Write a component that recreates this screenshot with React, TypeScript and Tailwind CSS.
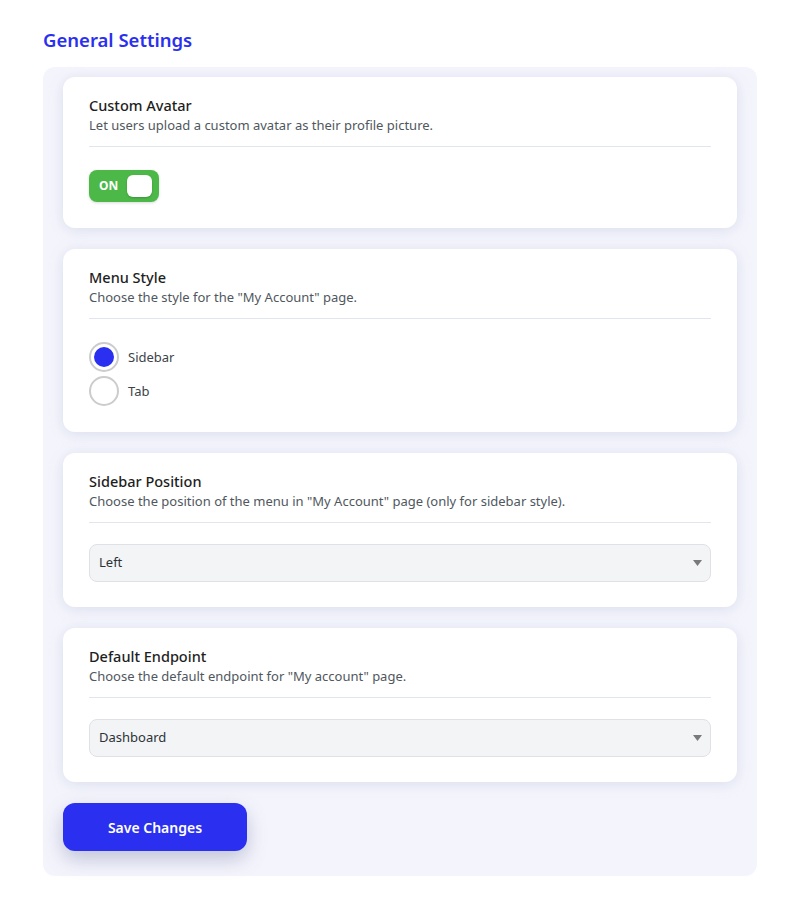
import { useState } from "react";

function CardHeader({ title, desc }: { title: string; desc: string }) {
  return (
    <div className="border-b border-[#e3e5ee] pb-[11px]">
      <h3 className="text-[14.5px] leading-[20px] font-medium text-[#1e1e1e]">{title}</h3>
      <p className="text-[13px] leading-[20px] text-[#50575e]">{desc}</p>
    </div>
  );
}

function Card({ children, pb = "pb-[26px]" }: { children: React.ReactNode; pb?: string }) {
  return (
    <div className={`rounded-xl bg-white px-[26px] pt-[18px] ${pb} shadow-[0_2px_14px_rgba(170,176,210,0.35)]`}>
      {children}
    </div>
  );
}

function Select({ value }: { value: string }) {
  return (
    <div className="mt-[21px] flex h-[38px] items-center justify-between rounded-lg border border-[#e0e1e6] bg-[#f3f4f6] pl-[9px] pr-[8px]">
      <span className="text-[13px] text-[#2c3338]">{value}</span>
      <svg width="9" height="6" viewBox="0 0 9 6">
        <path d="M0 0 L9 0 L4.5 6 Z" fill="#7a7a7a" />
      </svg>
    </div>
  );
}

export default function App() {
  const [menu, setMenu] = useState("sidebar");

  return (
    <div className="min-h-[900px] bg-white px-[43px] pt-[28px]" style={{ fontFamily: '"Noto Sans", "Open Sans", sans-serif' }}>
      <h1 className="mb-[15px] text-[18.5px] leading-[24px] font-semibold text-[#2b2ff0]">General Settings</h1>

      <div className="flex flex-col gap-[21px] rounded-xl bg-[#f4f5fc] px-[20px] pt-[10px] pb-[25px]">
        <Card>
          <CardHeader title="Custom Avatar" desc="Let users upload a custom avatar as their profile picture." />
          <div className="mt-[23px] flex h-[32px] w-[70px] items-center justify-between rounded-lg bg-[#4cb848] pl-[10px] pr-[7px] shadow-[0_1px_3px_rgba(0,0,0,0.15)]">
            <span className="text-[12px] font-bold text-white">ON</span>
            <span className="h-[22px] w-[25px] rounded-md bg-white shadow-[0_1px_2px_rgba(0,0,0,0.2)]" />
          </div>
        </Card>

        <Card>
          <CardHeader title="Menu Style" desc={'Choose the style for the "My Account" page.'} />
          <div className="mt-[23px] flex flex-col gap-[4px]">
            {[
              { id: "sidebar", label: "Sidebar" },
              { id: "tab", label: "Tab" },
            ].map((o) => (
              <label key={o.id} className="flex cursor-pointer items-center gap-[9px]" onClick={() => setMenu(o.id)}>
                <span className="flex h-[30px] w-[30px] items-center justify-center rounded-full border-2 border-[#cccccc] bg-white">
                  {menu === o.id && <span className="h-[20px] w-[20px] rounded-full bg-[#2b2ff0]" />}
                </span>
                <span className="pt-[2px] text-[13px] text-[#3c434a]">{o.label}</span>
              </label>
            ))}
          </div>
        </Card>

        <Card pb="pb-[25px]">
          <CardHeader
            title="Sidebar Position"
            desc={'Choose the position of the menu in "My Account" page (only for sidebar style).'}
          />
          <Select value="Left" />
        </Card>

        <Card pb="pb-[25px]">
          <CardHeader title="Default Endpoint" desc={'Choose the default endpoint for "My account" page.'} />
          <Select value="Dashboard" />
        </Card>

        <div>
          <button className="h-[48px] w-[184px] rounded-xl bg-[#2b2ff0] text-[14px] font-semibold text-white shadow-[0_8px_20px_rgba(40,45,110,0.25)]">
            Save Changes
          </button>
        </div>
      </div>
    </div>
  );
}
